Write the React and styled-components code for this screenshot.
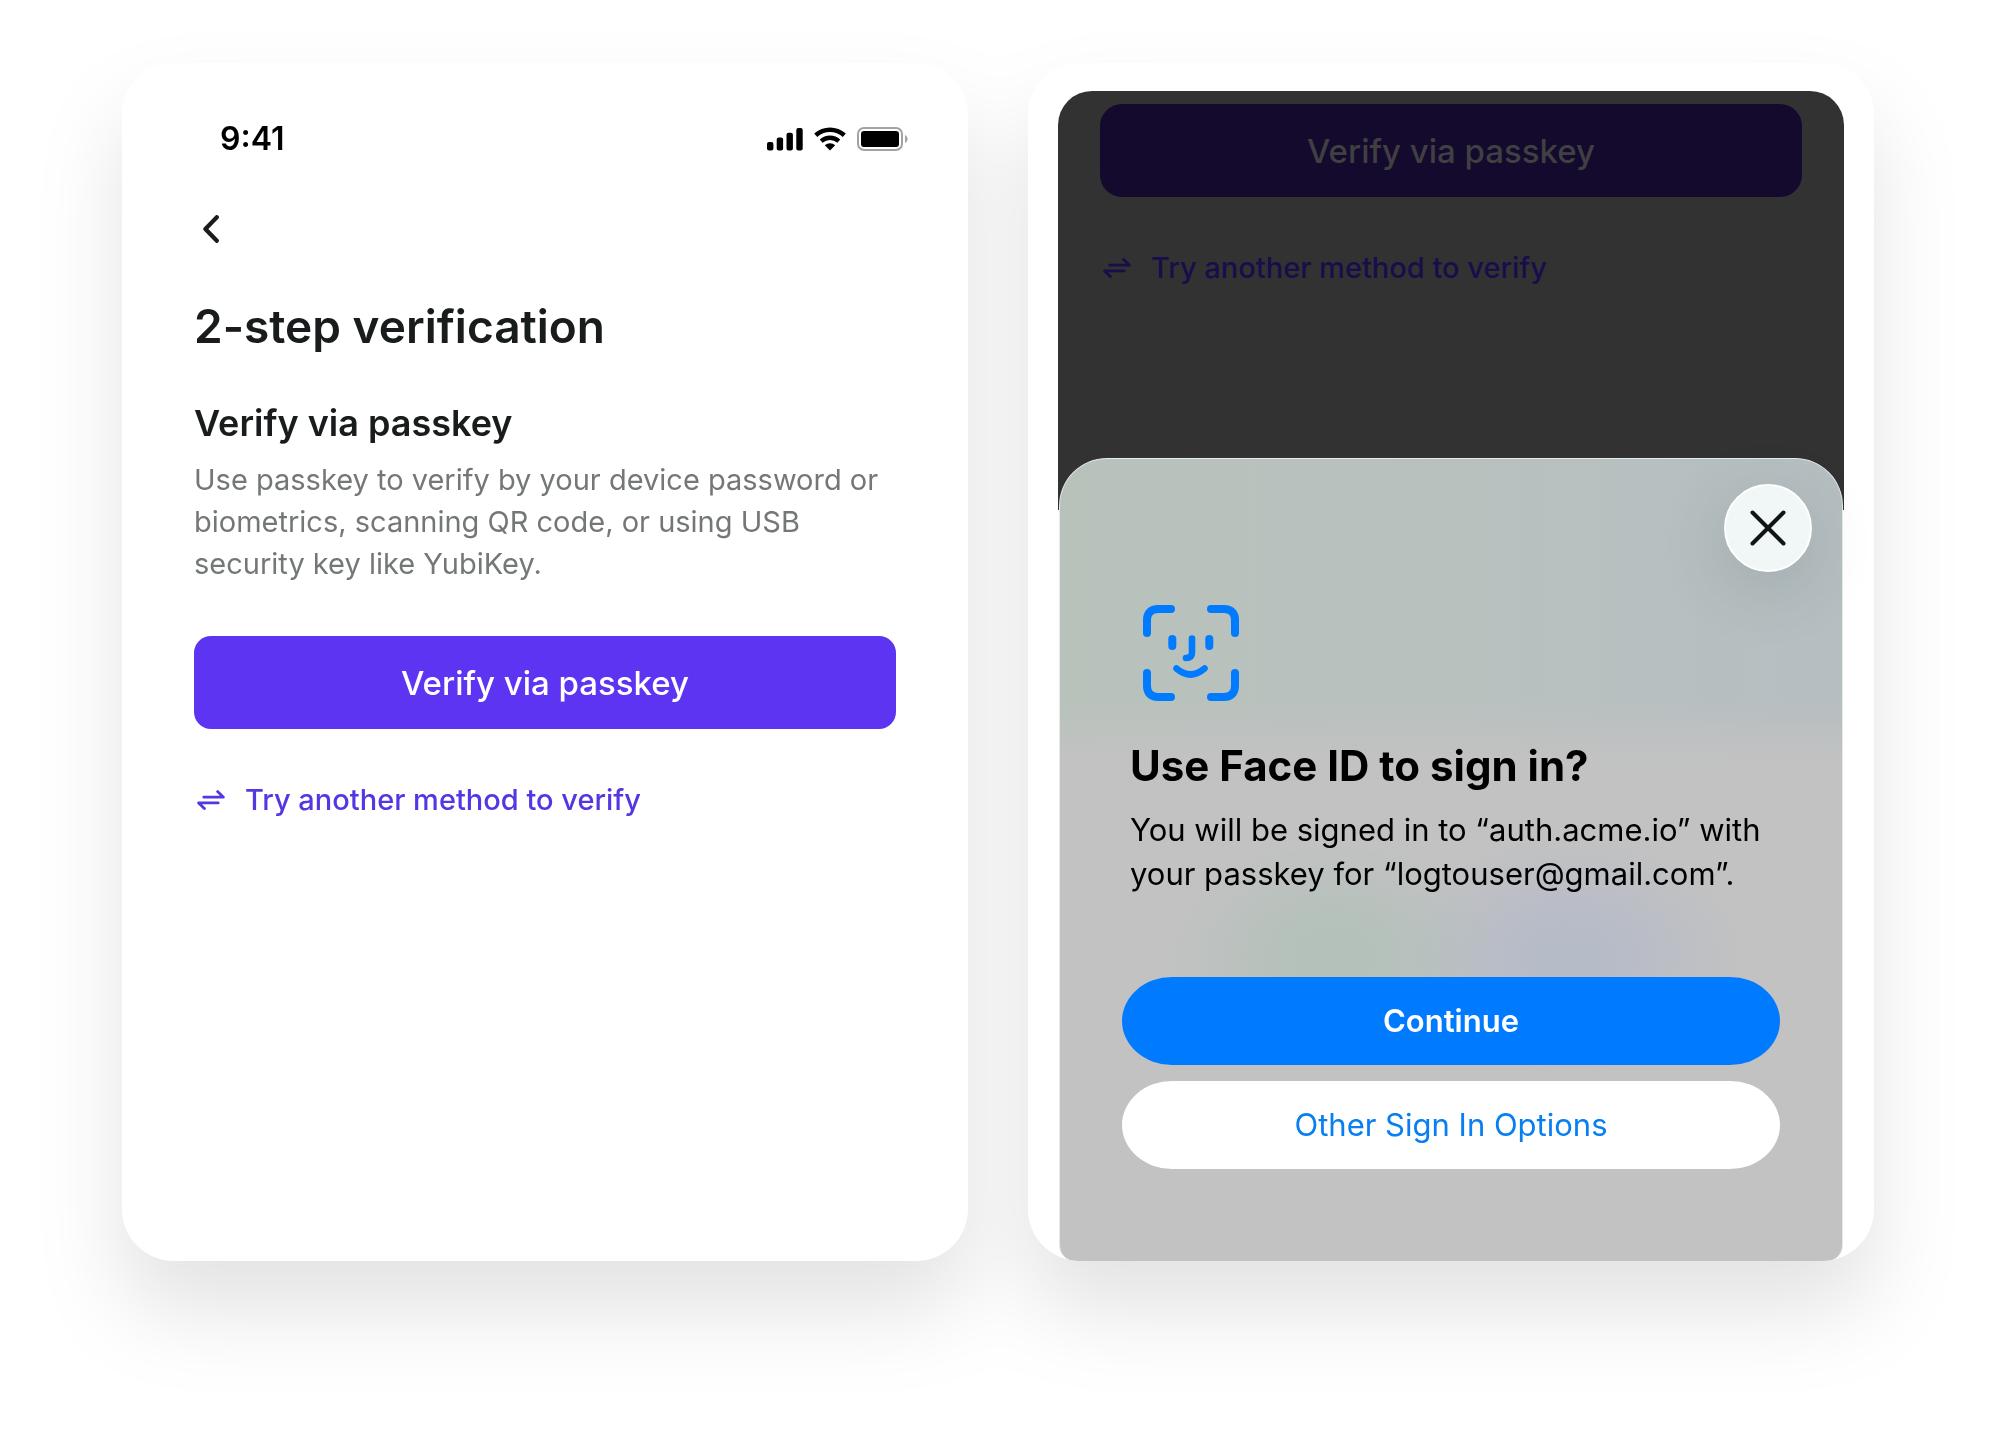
import React from "react";
import styled, { createGlobalStyle } from "styled-components";

const GlobalStyle = createGlobalStyle`
  * {
    box-sizing: border-box;
  }

  body {
    margin: 0;
    background: #ffffff;
    color: #191c1d;
    font-family: Inter, "Liberation Sans", sans-serif;
  }

  h1, h2, p {
    margin: 0;
  }

  button {
    margin: 0;
    padding: 0;
    border: none;
    background: none;
    color: inherit;
    font-family: inherit;
    cursor: pointer;
  }

  svg {
    display: block;
  }
`;

const Page = styled.main`
  display: grid;
  grid-template-columns: repeat(2, minmax(0, 1fr));
  gap: 60px;
  padding: 63px 119px 180px 122px;
  filter: drop-shadow(0 50px 42px rgba(0, 0, 0, 0.11));
`;

const Phone = styled.section`
  display: flex;
  flex-direction: column;
  overflow: hidden;
  border-radius: 52px;
  background: #ffffff;
`;

const StatusBar = styled.div`
  display: flex;
  align-items: center;
  justify-content: space-between;
  padding: 56px 60px 0 98px;
`;

const Time = styled.span`
  color: #000000;
  font-size: 32px;
  font-weight: 600;
  line-height: 40px;
`;

const StatusIcons = styled.div`
  display: flex;
  align-items: center;
  gap: 11px;
`;

const Content = styled.div`
  display: flex;
  flex-direction: column;
  align-items: flex-start;
  padding: 46px 72px;
`;

const BackButton = styled.button`
  display: flex;
  align-items: center;
  justify-content: center;
  width: 34px;
  height: 48px;
`;

const Title = styled.h1`
  margin-top: 43px;
  font-size: 46px;
  font-weight: 600;
  line-height: 60px;
`;

const Subtitle = styled.h2`
  margin-top: 43px;
  font-size: 36px;
  font-weight: 600;
  line-height: 48px;
`;

const Description = styled.p`
  margin: 12px 0 51px;
  color: #747778;
  font-size: 29px;
  line-height: 42px;
`;

const PrimaryButton = styled.button`
  width: 100%;
  height: 93px;
  border-radius: ${(props) => (props.$dimmed ? 22 : 17)}px;
  background: ${(props) => (props.$dimmed ? "#130a2e" : "#5d34f2")};
  color: ${(props) => (props.$dimmed ? "#413f41" : "#ffffff")};
  font-size: 33px;
  font-weight: 500;
  line-height: 40px;
`;

const SwitchLink = styled.a`
  display: flex;
  align-items: center;
  gap: 20px;
  margin-top: 51px;
  padding-left: 3px;
  color: ${(props) => (props.$dimmed ? "#170e4a" : "#5536e2")};
  font-size: 29px;
  font-weight: 500;
  line-height: 40px;
  text-decoration: none;
`;

const Screen = styled.div`
  display: flex;
  flex: 1;
  flex-direction: column;
  padding: 28px 30px 0;
`;

const Backdrop = styled.div`
  display: flex;
  flex-direction: column;
  align-items: flex-start;
  padding: 13px 42px 222px;
  border-radius: 34px 34px 0 0;
  background: #323232;
`;

const Sheet = styled.div`
  position: relative;
  flex: 1;
  margin: -52px 1px 0;
  padding: 146px 62px 92px;
  border: 1px solid #e4ebe8;
  border-bottom: none;
  border-radius: 48px 48px 16px 16px;
  background:
    radial-gradient(ellipse 170px 120px at 35% 62%, rgba(168, 192, 180, 0.55) 20%, transparent),
    radial-gradient(ellipse 180px 120px at 65% 62%, rgba(174, 182, 204, 0.6) 20%, transparent),
    linear-gradient(to bottom, transparent 30%, #c2c2c2 38%),
    linear-gradient(to right, #b8c2bb, #b9c1bf 50%, #b5bec1);
  color: #000000;
`;

const CloseButton = styled.button`
  position: absolute;
  top: 25px;
  right: 30px;
  display: flex;
  align-items: center;
  justify-content: center;
  width: 88px;
  height: 88px;
  border: 2px solid #ffffff;
  border-radius: 50%;
  background: #f1f7f7;
  box-shadow: 0 16px 64px rgba(60, 80, 80, 0.18);
`;

const SheetText = styled.div`
  padding-left: 8px;
`;

const FaceIcon = styled.svg`
  margin-left: 13px;
`;

const SheetTitle = styled.h2`
  margin-top: 39px;
  font-size: 42px;
  font-weight: 700;
  line-height: 52px;
`;

const SheetBody = styled.p`
  margin-top: 16px;
  font-size: 31px;
  line-height: 44px;
`;

const SheetActions = styled.div`
  display: flex;
  flex-direction: column;
  gap: 16px;
  margin-top: 81px;
`;

const PillButton = styled.button`
  height: 88px;
  border-radius: 50px / 44px;
  background: ${(props) => (props.$filled ? "#007bff" : "#ffffff")};
  color: ${(props) => (props.$filled ? "#ffffff" : "#087ff0")};
  font-size: 31px;
  font-weight: ${(props) => (props.$filled ? 600 : 400)};
  line-height: 40px;
`;

const Signal = () => (
  <svg width="36" height="24" viewBox="0 0 36 24" fill="#000" aria-hidden="true">
    <rect x="0" y="15" width="6.4" height="8.5" rx="2" />
    <rect x="9.7" y="10.5" width="6.4" height="13" rx="2" />
    <rect x="19.5" y="5.7" width="6.4" height="17.8" rx="2" />
    <rect x="29.3" y="1" width="6.4" height="22.5" rx="2" />
  </svg>
);

const Wifi = () => (
  <svg width="32" height="24" viewBox="0 0 32 24" aria-hidden="true">
    <path d="M1.7 8.2a21.5 21.5 0 0 1 28.6 0" fill="none" stroke="#000" strokeWidth="4.6" />
    <path d="M7.2 14.1a13.3 13.3 0 0 1 17.6 0" fill="none" stroke="#000" strokeWidth="4.4" />
    <path d="M10.8 18.2a8 8 0 0 1 10.4 0L16 23.6z" fill="#000" />
  </svg>
);

const Battery = () => (
  <svg width="51" height="24" viewBox="0 0 51 24" aria-hidden="true">
    <rect x="1" y="1" width="44" height="22" rx="6" fill="none" stroke="#a3a3a3" strokeWidth="2" />
    <rect x="4" y="4" width="38" height="16" rx="3" fill="#000" />
    <path d="M48 8v8c3.4-1.4 3.4-6.6 0-8z" fill="#a3a3a3" />
  </svg>
);

const SwitchIcon = () => (
  <svg
    width="28"
    height="20"
    viewBox="0 0 28 20"
    fill="none"
    stroke="currentColor"
    strokeWidth="2.8"
    strokeLinecap="round"
    strokeLinejoin="round"
    aria-hidden="true"
  >
    <path d="M6.8 7.2h19.6L20.6 1.6" />
    <path d="M21.2 12.9H1.6l5.800 5.600" />
  </svg>
);

const VerifyActions = ({ dimmed }) => (
  <>
    <PrimaryButton type="button" $dimmed={dimmed}>
      Verify via passkey
    </PrimaryButton>
    <SwitchLink href="#methods" $dimmed={dimmed}>
      <SwitchIcon />
      Try another method to verify
    </SwitchLink>
  </>
);

const VerificationPhone = () => (
  <Phone>
    <StatusBar>
      <Time>9:41</Time>
      <StatusIcons>
        <Signal />
        <Wifi />
        <Battery />
      </StatusIcons>
    </StatusBar>
    <Content>
      <BackButton type="button" aria-label="Back">
        <svg width="16" height="28" viewBox="0 0 16 28" aria-hidden="true">
          <path
            d="M13.8 2.2L2.4 14l11.400 11.800"
            fill="none"
            stroke="#191c1d"
            strokeWidth="4.2"
            strokeLinecap="round"
            strokeLinejoin="round"
          />
        </svg>
      </BackButton>
      <Title>2-step verification</Title>
      <Subtitle>Verify via passkey</Subtitle>
      <Description>
        Use passkey to verify by your device password or biometrics, scanning QR
        code, or using USB security key like YubiKey.
      </Description>
      <VerifyActions />
    </Content>
  </Phone>
);

const PasskeyPhone = () => (
  <Phone>
    <Screen>
      <Backdrop>
        <VerifyActions dimmed />
      </Backdrop>
      <Sheet role="dialog" aria-labelledby="sheet-title">
        <CloseButton type="button" aria-label="Close">
          <svg width="36" height="36" viewBox="0 0 36 36" aria-hidden="true">
            <path
              d="M2.5 2.5l31 31M33.5 2.5l-31 31"
              stroke="#111516"
              strokeWidth="4"
              strokeLinecap="round"
            />
          </svg>
        </CloseButton>
        <SheetText>
          <FaceIcon
            width="96"
            height="96"
            viewBox="0 0 96 96"
            fill="none"
            stroke="#007bff"
            strokeWidth="8"
            strokeLinecap="round"
            strokeLinejoin="round"
            aria-hidden="true"
          >
            <path d="M4 28V15C4 8 8 4 15 4h13" />
            <path d="M68 4h13c7 0 11 4 11 11v13" />
            <path d="M92 68v13c0 7-4 11-11 11H68" />
            <path d="M28 92H15C8 92 4 88 4 81V68" />
            <path d="M29.3 34v7M66.3 34v7" />
            <path d="M49 33.5v14q0 5.5-6 5.5" strokeWidth="6.6" />
            <path d="M33.5 63.500q14 12 28 0" strokeWidth="6.6" />
          </FaceIcon>
          <SheetTitle id="sheet-title">Use Face ID to sign in?</SheetTitle>
          <SheetBody>
            You will be signed in to “auth.acme.io” with your passkey for
            “logtouser@gmail.com”.
          </SheetBody>
        </SheetText>
        <SheetActions>
          <PillButton type="button" $filled>
            Continue
          </PillButton>
          <PillButton type="button">Other Sign In Options</PillButton>
        </SheetActions>
      </Sheet>
    </Screen>
  </Phone>
);

const App = () => (
  <>
    <GlobalStyle />
    <Page>
      <VerificationPhone />
      <PasskeyPhone />
    </Page>
  </>
);

export default App;
